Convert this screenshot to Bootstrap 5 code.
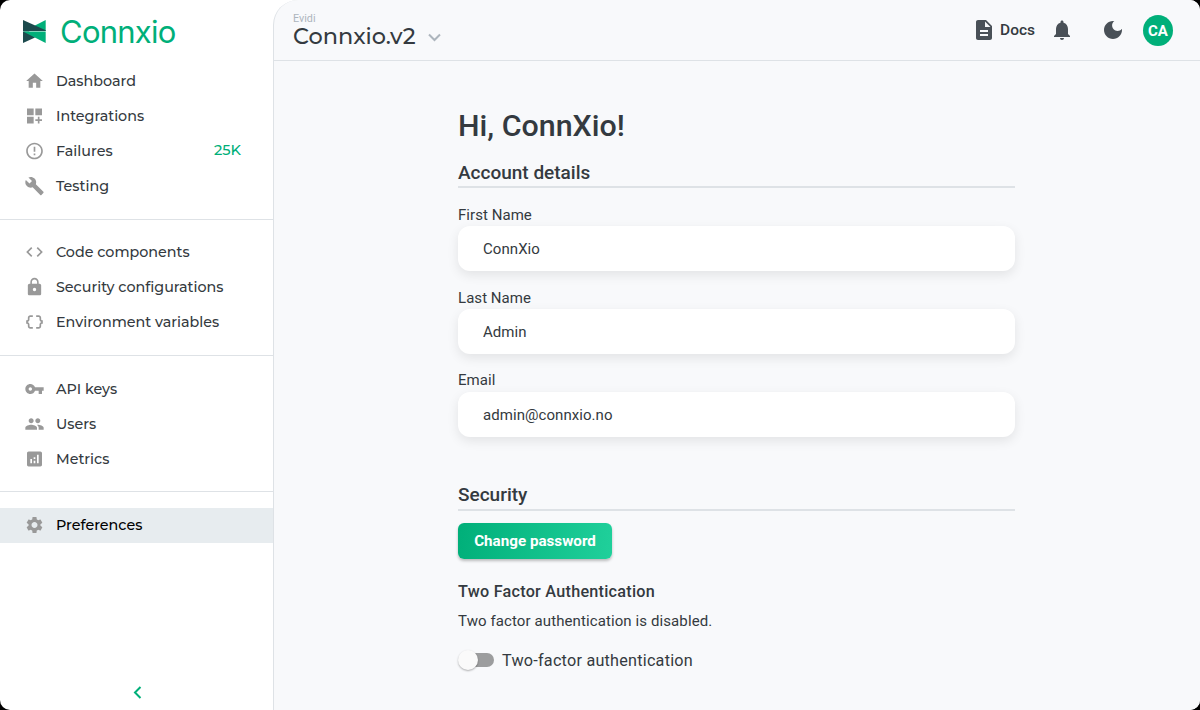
<!DOCTYPE html>
<html lang="en">
<head>
<meta charset="utf-8">
<meta name="viewport" content="width=device-width, initial-scale=1">
<title>Connxio – Preferences</title>
<link href="https://cdn.jsdelivr.net/npm/bootstrap@5.3.0/dist/css/bootstrap.min.css" rel="stylesheet">
<style>
  :root { --ink: #343a40; --brand: #00af79; --line: #dee2e6; --canvas: #f8f9fb; }
  body { background: #000; color: var(--ink); font-family: Roboto, "Liberation Sans", sans-serif; overflow: hidden; }
  .app-shell { height: 710px; border-radius: 10px; background: #fff; }
  .side { width: 273px; font-family: Montserrat, Inter, sans-serif; }
  .brand-row { height: 63px; padding: 0 0 0 23px; gap: 14px; }
  .brand-name { color: var(--brand); font: 400 31px/1 Inter, sans-serif; letter-spacing: -.75px; }
  .side .nav-link { height: 35px; padding: 0 32px 0 24.6px; gap: 11.4px; font-size: 14.3px; font-weight: 500; color: var(--ink); }
  .side .nav-link.active { background: #e7ecef; color: #000; }
  .side .nav-link svg { width: 20px; height: 20px; fill: #999; flex: none; transform: translateX(-.5px); }
  .nav-group { padding: 15px 0; border-bottom: 1px solid var(--line); }
  .nav-group:first-of-type { padding: 0 0 16px; }
  .nav-group:last-of-type { padding-top: 16px; border: 0; }
  .nav-group:nth-of-type(odd) .nav-label { padding-top: 2px; }
  .nav-group:nth-of-type(even) svg { margin-bottom: 1px; }
  .side .count { color: var(--brand); font-size: 14.5px; line-height: 20px; padding-bottom: 2px; }
  .pane { background: var(--canvas); border-left: 1px solid var(--line); border-top-left-radius: 25px; }
  .topbar { height: 61px; border-bottom: 1px solid var(--line); padding: 1px 27px 0 19px; }
  .org { font-size: 10.8px; line-height: 12px; color: #adb5bd; }
  .project { font: 500 22.4px/23px Montserrat, Inter, sans-serif; padding-bottom: 1px; }
  .topbar .glyph { width: 24px; height: 24px; fill: #495057; margin-bottom: 1px; }
  .docs { font-size: 15.5px; font-weight: 500; gap: 4px; }
  .topbar .bell { margin-left: 15px; }
  .topbar .moon { margin-left: 27px; margin-right: 18px; }
  .avatar { width: 30px; height: 31px; padding-top: 1px; background: var(--brand); color: #fff; font-size: 15px; font-weight: 700; }
  .content { padding-right: 1px; }
  .column { width: 557px; }
  .hello { font-size: 30.4px; line-height: 38px; font-weight: 500; margin: 46px 0 15px; }
  .section-title { font-size: 19px; line-height: 26px; height: 28px; font-weight: 500; border-bottom: 2px solid var(--line); margin: 0; }
  .section-title.security { line-height: 26px; height: 29px; }
  .details { padding-bottom: 45px; }
  .field-label { font-size: 15px; line-height: 20px; margin: 17px 0 1px; display: block; letter-spacing: .05px; }
  .field-label.email { margin: 16px 0 2px; }
  .field-box { height: 45px; border: 0; border-radius: 12px; padding: 0 25px; font-size: 15px; letter-spacing: .06px; color: var(--ink); box-shadow: 0 4px 12px rgba(0,0,0,.09); }
  .btn-brand { width: 154px; height: 36px; padding: 0; margin-top: 12px; border: 0; border-radius: 6px; font-size: 15.2px; font-weight: 700; color: #fff; background: linear-gradient(100deg, #00af79, #20d09b); box-shadow: 0 2px 3px rgba(0,0,0,.25); }
  .sub-title { font-size: 16.2px; line-height: 20px; font-weight: 500; margin: 23px 0 9px; letter-spacing: .25px; }
  .note { font-size: 15px; line-height: 20px; margin-bottom: 19px; letter-spacing: .1px; }
  .toggle { width: 36px; height: 20px; margin-bottom: 1px; }
  .toggle-track { width: 34px; height: 14px; border-radius: 7px; background: #9c9d9e; margin-left: 2px; }
  .toggle-thumb { width: 20px; height: 20px; left: 0; top: 0; background: #fafafa; box-shadow: 0 1px 2px rgba(0,0,0,.3); }
  .toggle-label { font-size: 16.2px; line-height: 20px; letter-spacing: .23px; }
</style>
</head>
<body>
<div class="app-shell d-flex overflow-hidden">
  <aside class="side d-flex flex-column flex-shrink-0">
    <header class="brand-row d-flex align-items-center">
      <svg width="23" height="23" viewBox="0 0 23 23"><path fill="#00af79" d="M22.700 0v11H11V6z"/><path fill="#1c4a4d" d="M0 0l22.700 10.300V11H0z"/><path fill="#1c4a4d" d="M0 11.400h6L12 17.500 0 23z"/><path fill="#00af79" d="M0 11.400h22.700V23z"/></svg>
      <span class="brand-name">Connxio</span>
    </header>
    <nav class="nav-group nav flex-column">
      <a class="nav-link d-flex align-items-center" href="#"><svg viewBox="0 0 24 24"><path d="M10 20v-6h4v6h5v-8h3L12 3 2 12h3v8z"/></svg><span class="nav-label">Dashboard</span></a>
      <a class="nav-link d-flex align-items-center" href="#"><svg viewBox="0 0 24 24"><path d="M3 3h8v8H3zM13 3h8v8h-8zM3 13h8v8H3zM18 13h-2v3h-3v2h3v3h2v-3h3v-2h-3z"/></svg><span class="nav-label">Integrations</span></a>
      <a class="nav-link d-flex align-items-center" href="#"><svg viewBox="0 0 24 24"><path d="M11 15h2v2h-2zm0-8h2v6h-2zm.99-5C6.47 2 2 6.48 2 12s4.470 10 9.990 10C17.520 22 22 17.520 22 12S17.520 2 11.990 2zM12 20c-4.420 0-8-3.580-8-8s3.580-8 8-8 8 3.580 8 8-3.580 8-8 8z"/></svg><span class="nav-label">Failures</span><span class="count ms-auto">25K</span></a>
      <a class="nav-link d-flex align-items-center" href="#"><svg viewBox="0 0 24 24"><path d="M22.700 19l-9.100-9.100c.9-2.300.4-5-1.500-6.900-2-2-5-2.400-7.400-1.300L9 6 6 9 1.600 4.700C.4 7.100.9 10.100 2.900 12.100c1.900 1.900 4.600 2.400 6.900 1.500l9.100 9.100c.4.4 1 .4 1.400 0l2.300-2.300c.5-.4.5-1.100.1-1.400z"/></svg><span class="nav-label">Testing</span></a>
    </nav>
    <nav class="nav-group nav flex-column">
      <a class="nav-link d-flex align-items-center" href="#"><svg viewBox="0 0 24 24"><path d="M9.400 16.600L4.800 12l4.600-4.600L8 6l-6 6 6 6 1.400-1.400zm5.200 0l4.600-4.600-4.600-4.600L16 6l6 6-6 6-1.400-1.400z"/></svg><span class="nav-label">Code components</span></a>
      <a class="nav-link d-flex align-items-center" href="#"><svg viewBox="0 0 24 24"><path d="M18 8h-1V6c0-2.760-2.240-5-5-5S7 3.240 7 6v2H6c-1.100 0-2 .9-2 2v10c0 1.100.9 2 2 2h12c1.100 0 2-.9 2-2V10c0-1.100-.9-2-2-2zm-6 9c-1.100 0-2-.9-2-2s.9-2 2-2 2 .9 2 2-.9 2-2 2zm3.100-9H8.900V6c0-1.710 1.390-3.100 3.100-3.100 1.710 0 3.100 1.390 3.100 3.100v2z"/></svg><span class="nav-label">Security configurations</span></a>
      <a class="nav-link d-flex align-items-center" href="#"><svg viewBox="0 0 24 24"><path d="M4 7v2c0 .55-.45 1-1 1H2v4h1c.55 0 1 .45 1 1v2c0 1.650 1.350 3 3 3h3v-2H7c-.55 0-1-.45-1-1v-2c0-1.300-.84-2.420-2-2.830v-.34C5.160 11.420 6 10.300 6 9V7c0-.55.45-1 1-1h3V4H7C5.350 4 4 5.350 4 7zM21 10c-.55 0-1-.45-1-1V7c0-1.650-1.350-3-3-3h-3v2h3c.55 0 1 .45 1 1v2c0 1.300.84 2.420 2 2.830v.34c-1.160.41-2 1.520-2 2.830v2c0 .55-.45 1-1 1h-3v2h3c1.650 0 3-1.350 3-3v-2c0-.55.45-1 1-1h1v-4h-1z"/></svg><span class="nav-label">Environment variables</span></a>
    </nav>
    <nav class="nav-group nav flex-column">
      <a class="nav-link d-flex align-items-center" href="#"><svg viewBox="0 0 24 24"><path d="M12.650 10C11.830 7.670 9.610 6 7 6c-3.310 0-6 2.690-6 6s2.690 6 6 6c2.610 0 4.830-1.670 5.650-4H17v4h4v-4h2v-4H12.650zM7 14c-1.100 0-2-.9-2-2s.9-2 2-2 2 .9 2 2-.9 2-2 2z"/></svg><span class="nav-label">API keys</span></a>
      <a class="nav-link d-flex align-items-center" href="#"><svg viewBox="0 0 24 24"><path d="M16 11c1.660 0 2.990-1.340 2.990-3S17.660 5 16 5c-1.660 0-3 1.340-3 3s1.340 3 3 3zm-8 0c1.660 0 2.990-1.340 2.990-3S9.660 5 8 5C6.340 5 5 6.340 5 8s1.340 3 3 3zm0 2c-2.330 0-7 1.170-7 3.500V19h14v-2.500c0-2.330-4.670-3.500-7-3.500zm8 0c-.29 0-.62.020-.97.050 1.160.84 1.970 1.970 1.970 3.450V19h6v-2.500c0-2.330-4.670-3.500-7-3.500z"/></svg><span class="nav-label">Users</span></a>
      <a class="nav-link d-flex align-items-center" href="#"><svg viewBox="0 0 24 24"><path d="M19 3H5c-1.100 0-2 .9-2 2v14c0 1.100.9 2 2 2h14c1.100 0 2-.9 2-2V5c0-1.100-.9-2-2-2zM9 17H7v-5h2v5zm4 0h-2v-3h2v3zm0-5h-2v-2h2v2zm4 5h-2V7h2v10z"/></svg><span class="nav-label">Metrics</span></a>
    </nav>
    <nav class="nav-group nav flex-column">
      <a class="nav-link active d-flex align-items-center" href="#"><svg viewBox="0 0 24 24"><path d="M19.140 12.940c.04-.3.060-.61.060-.94 0-.32-.020-.64-.070-.94l2.030-1.580c.18-.14.23-.41.12-.61l-1.920-3.320c-.12-.22-.37-.29-.59-.22l-2.390.96c-.5-.38-1.030-.7-1.620-.94l-.36-2.540c-.04-.24-.24-.41-.48-.41h-3.840c-.24 0-.43.17-.47.41l-.36 2.540c-.59.24-1.130.57-1.620.94l-2.390-.96c-.22-.08-.47 0-.59.22L2.740 8.870c-.12.21-.08.47.12.61l2.030 1.580c-.05.3-.09.63-.09.94s.020.64.070.94l-2.030 1.580c-.18.14-.23.41-.12.61l1.920 3.320c.12.22.37.29.59.22l2.390-.96c.5.38 1.030.7 1.620.94l.36 2.540c.05.24.24.41.48.41h3.840c.24 0 .44-.17.47-.41l.36-2.540c.59-.24 1.130-.56 1.620-.94l2.390.96c.22.08.47 0 .59-.22l1.920-3.320c.12-.22.070-.47-.12-.61l-2.010-1.580zM12 15.600c-1.980 0-3.600-1.620-3.600-3.600s1.620-3.600 3.600-3.600 3.600 1.620 3.600 3.600-1.620 3.600-3.600 3.600z"/></svg><span class="nav-label">Preferences</span></a>
    </nav>
    <button class="btn border-0 p-0 mt-auto mx-auto mb-2 lh-1" aria-label="Collapse menu"><svg width="20" height="20" viewBox="0 0 20 20"><path d="M13.500 5L8 10.500l5.500 5.500" fill="none" stroke="#00af79" stroke-width="2"/></svg></button>
  </aside>
  <main class="pane flex-grow-1">
    <header class="topbar d-flex align-items-center">
      <div class="d-flex align-items-end gap-2 me-auto">
        <div><div class="org">Evidi</div><div class="project">Connxio.v2</div></div>
        <svg width="20" height="20" viewBox="0 0 20 20"><path d="M5 5.500l5.500 5.500L16 5.500" fill="none" stroke="#adb5bd" stroke-width="2"/></svg>
      </div>
      <a class="docs d-flex align-items-center text-reset text-decoration-none" href="#"><svg class="glyph" viewBox="0 0 24 24"><path d="M14 2H6c-1.100 0-1.990.9-1.990 2L4 20c0 1.100.89 2 1.990 2H18c1.100 0 2-.9 2-2V8l-6-6zm2 16H8v-2h8v2zm0-4H8v-2h8v2zm-3-5V3.500L18.500 9H13z"/></svg><span>Docs</span></a>
      <svg class="glyph bell" viewBox="0 0 24 24"><path d="M12 22c1.100 0 2-.9 2-2h-4c0 1.100.89 2 2 2zm6-6v-5c0-3.070-1.640-5.640-4.500-6.320V4c0-.83-.67-1.500-1.500-1.500s-1.500.67-1.500 1.500v.68C7.630 5.360 6 7.920 6 11v5l-2 2v1h16v-1l-2-2z"/></svg>
      <svg class="glyph moon" viewBox="0 0 24 24"><path d="M12 3c-4.970 0-9 4.030-9 9s4.030 9 9 9 9-4.030 9-9c0-.46-.04-.92-.1-1.360-.98 1.370-2.580 2.260-4.400 2.260-2.980 0-5.400-2.420-5.400-5.400 0-1.810.89-3.420 2.260-4.400-.44-.06-.9-.1-1.360-.1z"/></svg>
      <div class="avatar rounded-circle d-flex align-items-center justify-content-center">CA</div>
    </header>
    <div class="content">
    <div class="column mx-auto">
      <h1 class="hello">Hi, ConnXio!</h1>
      <h2 class="section-title">Account details</h2>
      <form class="details d-flex flex-column">
        <label class="field-label" for="first">First Name</label>
        <input class="form-control field-box" id="first" value="ConnXio">
        <label class="field-label" for="last">Last Name</label>
        <input class="form-control field-box" id="last" value="Admin">
        <label class="field-label email" for="email">Email</label>
        <input class="form-control field-box" id="email" value="admin@connxio.no">
      </form>
      <h2 class="section-title security">Security</h2>
      <button class="btn btn-brand d-block">Change password</button>
      <h3 class="sub-title">Two Factor Authentication</h3>
      <p class="note">Two factor authentication is disabled.</p>
      <div class="d-flex align-items-center gap-2">
        <div class="toggle position-relative d-flex align-items-center"><div class="toggle-track"></div><div class="toggle-thumb position-absolute rounded-circle"></div></div>
        <span class="toggle-label">Two-factor authentication</span>
      </div>
    </div>
    </div>
  </main>
</div>
<script src="https://cdn.jsdelivr.net/npm/bootstrap@5.3.0/dist/js/bootstrap.bundle.min.js"></script>
</body>
</html>
